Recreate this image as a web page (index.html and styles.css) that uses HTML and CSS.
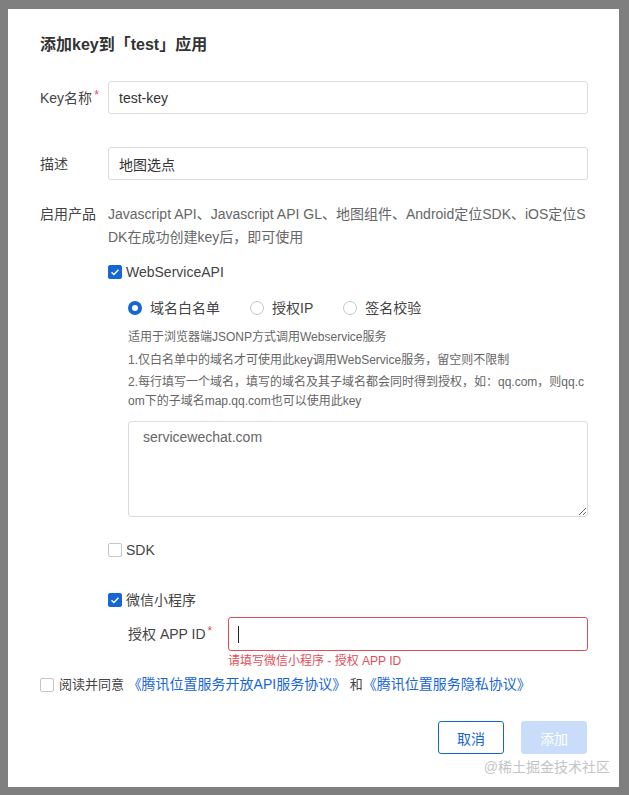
FILE: index.html
```html
<!DOCTYPE html>
<html lang="zh">
<head>
<meta charset="utf-8">
<link rel="stylesheet" href="styles.css">
</head>
<body>
<div class="dialog">
  <h1 class="title">添加key到「test」应用</h1>

  <div class="row first">
    <label class="label">Key名称<span class="req">*</span></label>
    <input class="input" type="text" value="test-key">
  </div>

  <div class="row desc-row">
    <label class="label">描述</label>
    <input class="input" type="text" value="地图选点">
  </div>

  <div class="row products">
    <label class="label">启用产品</label>
    <div class="prod-body">
      <p class="prod-text">Javascript API、Javascript API GL、地图组件、Android定位SDK、iOS定位SDK在成功创建key后，即可使用</p>

      <div class="check-line ws">
        <span class="cb checked"><svg viewBox="0 0 14 14" width="14" height="14"><path d="M3.5 7.2l2.4 2.4 4.6-4.8" fill="none" stroke="#fff" stroke-width="1.4"/></svg></span>
        <span class="check-label">WebServiceAPI</span>
      </div>

      <div class="radios">
        <span class="radio-item"><span class="radio on"></span>域名白名单</span>
        <span class="radio-item"><span class="radio"></span>授权IP</span>
        <span class="radio-item"><span class="radio"></span>签名校验</span>
      </div>

      <div class="help">
        <p>适用于浏览器端JSONP方式调用Webservice服务</p>
        <p>1.仅白名单中的域名才可使用此key调用WebService服务，留空则不限制</p>
        <p>2.每行填写一个域名，填写的域名及其子域名都会同时得到授权，如：qq.com，则qq.com下的子域名map.qq.com也可以使用此key</p>
      </div>

      <textarea class="textarea">servicewechat.com</textarea>

      <div class="check-line sdk">
        <span class="cb"></span>
        <span class="check-label">SDK</span>
      </div>

      <div class="check-line wx">
        <span class="cb checked"><svg viewBox="0 0 14 14" width="14" height="14"><path d="M3.5 7.2l2.4 2.4 4.6-4.8" fill="none" stroke="#fff" stroke-width="1.4"/></svg></span>
        <span class="check-label">微信小程序</span>
      </div>

      <div class="appid-row">
        <label class="appid-label">授权 APP ID<span class="req">*</span></label>
        <div class="appid-field">
          <div class="input error"><span class="caret"></span></div>
          <div class="error-text">请填写微信小程序 - 授权 APP ID</div>
        </div>
      </div>
    </div>
  </div>

  <div class="agree">
    <span class="cb"></span>
    <span class="agree-text">阅读并同意 <a class="link">《腾讯位置服务开放API服务协议》</a> 和<a class="link">《腾讯位置服务隐私协议》</a></span>
  </div>

  <div class="footer">
    <button class="btn btn-cancel">取消</button>
    <button class="btn btn-add">添加</button>
  </div>
</div>
<div class="watermark">@稀土掘金技术社区</div>
</body>
</html>
```

FILE: styles.css
```css
* { box-sizing: border-box; }
html, body { margin: 0; padding: 0; }
body {
  background: #7f7f7f;
  font-family: "Liberation Sans", "Noto Sans CJK SC", sans-serif;
  color: #333;
  font-size: 14px;
  width: 629px;
  height: 795px;
  overflow: hidden;
  position: relative;
}
.dialog {
  margin: 9px 0 0 8px;
  width: 611px;
  height: 778px;
  background: #fff;
  padding: 24px 31px 0 32px;
  display: flex;
  flex-direction: column;
}
.title {
  margin: 0;
  font-size: 16px;
  line-height: 24px;
  font-weight: bold;
  color: #333;
}
.row { display: flex; align-items: flex-start; }
.row.first { margin-top: 24px; align-items: center; }
.row.desc-row { margin-top: 33px; align-items: center; }
.label {
  width: 68px;
  flex: none;
  font-size: 14px;
  color: #444;
  line-height: 22px;
}
.req { color: #e34d59; font-size: 12px; vertical-align: top; position: relative; top: -3px; margin-left: 2px; }
.input {
  flex: 1;
  height: 33px;
  border: 1px solid #dcdcdc;
  border-radius: 3px;
  padding: 0 10px;
  font-family: inherit;
  font-size: 14px;
  color: #333;
  outline: none;
  background: #fff;
}
.row.products { margin-top: 23px; }
.products .label { line-height: 23px; }
.prod-body { flex: 1; min-width: 0; }
.prod-text {
  margin: 0;
  line-height: 23px;
  color: #666;
  word-break: break-all;
}
.check-line { display: flex; align-items: center; line-height: 22px; height: 22px; }
.check-line.ws { margin-top: 12px; }
.check-line.sdk { margin-top: 22px; }
.check-line.wx { margin-top: 28px; }
.cb {
  width: 14px;
  height: 14px;
  border: 1px solid #c6c6c6;
  border-radius: 2px;
  background: #fff;
  flex: none;
  display: inline-flex;
}
.cb.checked { background: #1766d6; border-color: #1766d6; }
.cb svg { display: block; margin: -1px; }
.check-label { margin-left: 4px; color: #444; }
.radios {
  margin-top: 14px;
  margin-left: 20px;
  display: flex;
  line-height: 22px;
  color: #444;
}
.radio-item { display: inline-flex; align-items: center; margin-right: 30px; }
.radio {
  width: 14px;
  height: 14px;
  border-radius: 50%;
  border: 1px solid #c6c6c6;
  margin-right: 8px;
  background: #fff;
}
.radio.on { border: 4px solid #1766d6; }
.help { margin: 9px 0 0 20px; }
.help p {
  margin: 0 0 3.5px;
  font-size: 12px;
  line-height: 19px;
  color: #666;
  word-break: break-all;
}
.textarea {
  display: block;
  margin: 10px 0 0 20px;
  width: calc(100% - 20px);
  height: 96px;
  border: 1px solid #dcdcdc;
  border-radius: 3px;
  padding: 6px 14px;
  font-family: inherit;
  font-size: 14px;
  line-height: 18px;
  color: #666;
  outline: none;
}
.appid-row { display: flex; margin-top: 6px; margin-left: 20px; }
.appid-label {
  width: 100px;
  flex: none;
  line-height: 34px;
  color: #444;
}
.appid-field { flex: 1; }
.input.error {
  display: flex;
  align-items: center;
  width: 100%;
  height: 34px;
  border-color: #e34d59;
  padding-left: 9px;
}
.caret { width: 1px; height: 17px; background: #222; }
.error-text {
  margin-top: 2px;
  font-size: 12px;
  line-height: 16px;
  color: #e34d59;
}
.agree {
  margin-top: 4px;
  display: flex;
  align-items: center;
  line-height: 22px;
}
.agree-text { margin-left: 5px; font-size: 13px; color: #444; }
.link { color: #1766d6; text-decoration: none; font-size: 14px; }
.footer {
  margin-top: 25px;
  display: flex;
  justify-content: flex-end;
  gap: 17px;
  padding-right: 1px;
}
.btn {
  width: 66px;
  height: 33px;
  border-radius: 3px;
  font-family: inherit;
  font-size: 14px;
  padding: 0;
  cursor: pointer;
}
.btn-cancel { background: #fff; border: 1px solid #1766d6; color: #1766d6; }
.btn-add { background: #c9ddfa; border: 1px solid #c9ddfa; color: #fff; }
.watermark {
  position: absolute;
  right: 19px;
  top: 757px;
  font-size: 14px;
  line-height: 20px;
  color: #c4c4c4;
}
```
